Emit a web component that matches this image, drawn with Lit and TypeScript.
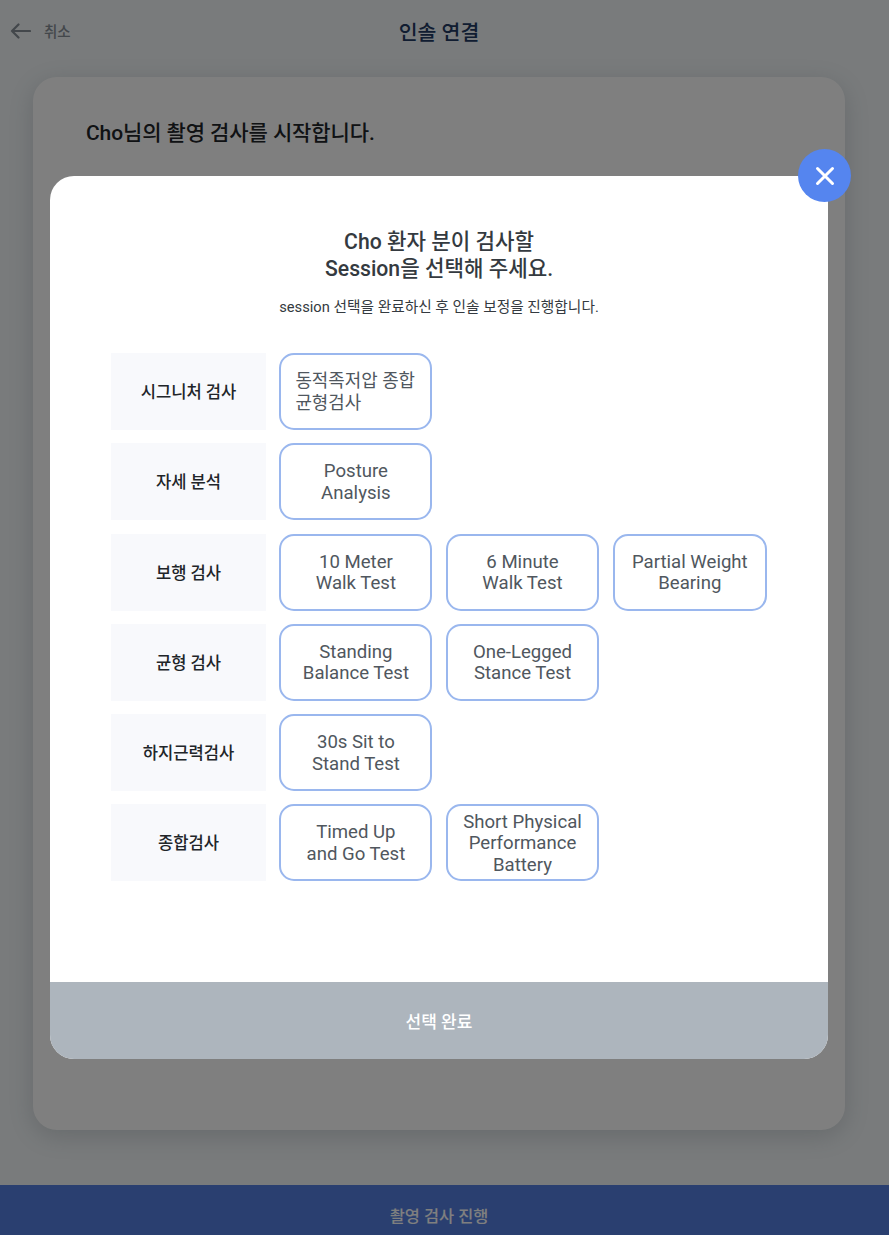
import { LitElement, html, css, svg } from "lit";
import { customElement } from "lit/decorators.js";

const ROWS: { label: string; items: string[][] }[] = [
  { label: "시그니처 검사", items: [["동적족저압 종합", "균형검사"]] },
  { label: "자세 분석", items: [["Posture", "Analysis"]] },
  { label: "보행 검사", items: [["10 Meter", "Walk Test"], ["6 Minute", "Walk Test"], ["Partial Weight", "Bearing"]] },
  { label: "균형 검사", items: [["Standing", "Balance Test"], ["One-Legged", "Stance Test"]] },
  { label: "하지근력검사", items: [["30s Sit to", "Stand Test"]] },
  { label: "종합검사", items: [["Timed Up", "and Go Test"], ["Short Physical", "Performance", "Battery"]] },
];

@customElement("app-root")
export class AppRoot extends LitElement {
  static styles = css`
    :host {
      display: block;
      position: relative;
      width: 889px;
      height: 1235px;
      overflow: hidden;
      background: #f2f6f8;
      font-family: Roboto, "Noto Sans CJK KR", sans-serif;
      color: #212529;
    }
    .page { display: flex; flex-direction: column; height: 100%; }
    .top {
      height: 61px;
      padding-right: 11px;
      display: grid;
      grid-template-columns: 1fr auto 1fr;
      align-items: center;
      flex: none;
    }
    .back { display: flex; align-items: center; gap: 13px; padding-left: 10px; font-size: 14.5px; font-weight: 500; color: #868e96; }
    .back svg { display: block; }
    .title { font-size: 20.5px; font-weight: 500; color: #233a63; }
    .card {
      flex: none;
      margin: 16px 44px 0 33px;
      height: 1053px;
      box-sizing: border-box;
      padding: 42px 53px;
      border-radius: 24px;
      background: #fff;
      box-shadow: 0 6px 24px rgba(60, 80, 90, 0.2);
      font-size: 21px;
      font-weight: 500;
      line-height: 28px;
      letter-spacing: -0.1px;
    }
    .cta {
      margin-top: auto;
      height: 50px;
      flex: none;
      display: flex;
      align-items: center;
      justify-content: center;
      background: #547ee0;
      color: #fff;
      font-size: 16.4px;
      font-weight: 500;
      padding: 9px 11px 0 0;
      box-sizing: border-box;
    }
    .overlay {
      position: absolute;
      inset: 0;
      background: rgba(0, 0, 0, 0.5);
      padding: 176px 61px 0 50px;
      box-sizing: border-box;
    }
    .modal {
      position: relative;
      height: 883px;
      background: #fff;
      border-radius: 24px;
      display: flex;
      flex-direction: column;
    }
    .close {
      position: absolute;
      top: -27px;
      right: -23px;
      width: 53px;
      height: 53px;
      border-radius: 50%;
      background: #5585ef;
      display: flex;
      align-items: center;
      justify-content: center;
    }
    .body { flex: 1; padding: 53px 61px 0; text-align: center; }
    h2 {
      margin: 0;
      font-size: 21.2px;
      font-weight: 500;
      line-height: 26.5px;
      color: #343a40;
    }
    .sub { margin: 13px 0 0; font-size: 14.7px; line-height: 24px; color: #343a40; }
    .grid { margin-top: 34px; display: flex; flex-direction: column; gap: 13.3px; }
    .row {
      display: grid;
      grid-template-columns: 155px 153px 153.4px 154.5px;
      column-gap: 13.4px;
      height: 77px;
    }
    .label {
      background: #f8f9fc;
      display: flex;
      align-items: center;
      justify-content: center;
      font-size: 16.6px;
      font-weight: 500;
      color: #212529;
      padding-bottom: 1px;
      box-sizing: border-box;
    }
    .opt {
      box-sizing: border-box;
      border: 2px solid #9ab7ee;
      border-radius: 15px;
      background: #fff;
      display: flex;
      flex-direction: column;
      align-items: center;
      justify-content: center;
      padding-top: 2px;
      font-size: 18.6px;
      line-height: 21.5px;
      color: #50575e;
    }
    .opt.left { align-items: flex-start; padding-left: 14px; padding-top: 0; font-size: 17.9px; }
    .done {
      height: 77px;
      flex: none;
      background: #adb5bd;
      border-radius: 0 0 24px 24px;
      color: #fff;
      font-size: 17px;
      font-weight: 500;
      display: flex;
      align-items: center;
      justify-content: center;
    }
  `;

  render() {
    return html`
      <div class="page">
        <div class="top">
          <div class="back">
            <svg width="21" height="18" viewBox="0 0 21 18" fill="none" stroke="#868e96" stroke-width="2.2" stroke-linecap="round" stroke-linejoin="round">
              ${svg`<path d="M20 9H2M8.5 2.5 2 9l6.5 6.5" />`}
            </svg>
            <span>취소</span>
          </div>
          <div class="title">인솔 연결</div>
          <div></div>
        </div>
        <div class="card">Cho님의 촬영 검사를 시작합니다.</div>
        <div class="cta">촬영 검사 진행</div>
      </div>
      <div class="overlay">
        <div class="modal">
          <div class="close">
            <svg width="22" height="22" viewBox="0 0 22 22" fill="none" stroke="#fff" stroke-width="3" stroke-linecap="round">
              ${svg`<path d="M3.5 3.5l15 15M18.5 3.5l-15 15" />`}
            </svg>
          </div>
          <div class="body">
            <h2>Cho 환자 분이 검사할<br />Session을 선택해 주세요.</h2>
            <p class="sub">session 선택을 완료하신 후 인솔 보정을 진행합니다.</p>
            <div class="grid">
              ${ROWS.map(
                (r, i) => html`
                  <div class="row">
                    <div class="label">${r.label}</div>
                    ${r.items.map(
                      (it) => html`<div class="opt ${i === 0 ? "left" : ""}">${it.map((l) => html`<span>${l}</span>`)}</div>`
                    )}
                  </div>
                `
              )}
            </div>
          </div>
          <div class="done">선택 완료</div>
        </div>
      </div>
    `;
  }
}
